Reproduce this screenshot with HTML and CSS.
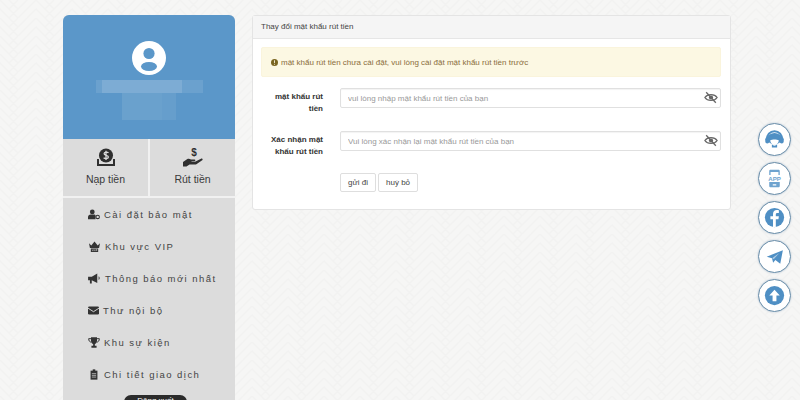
FILE: index.html
```html
<!DOCTYPE html>
<html lang="vi">
<head>
<meta charset="utf-8">
<title>Thay đổi mật khẩu rút tiền</title>
<link rel="stylesheet" href="styles.css">
</head>
<body>
<svg class="pattern" width="0" height="0"><defs><pattern id="zig" width="36" height="18" patternUnits="userSpaceOnUse"><path d="M-9 0L9 18M-9 -9L18 18M9 0L18 9M0 9l9 9M0-9L18 9M27 0L9 18M36 0L18 18M18 0L9 9M36 9l-9 9M36-9L18 9" fill="none" stroke="#f2f2f1" stroke-width="1.500"/></pattern></defs></svg>
<svg class="bg" aria-hidden="true"><rect width="100%" height="100%" fill="url(#zig)"/></svg>
<div class="page">
  <aside class="side">
    <div class="profile">
      <svg class="avatar" viewBox="0 0 34 34"><circle cx="17" cy="17" r="17" fill="#fff"/><circle cx="17" cy="12.500" r="5.600" fill="#5b97c9"/><ellipse cx="17" cy="25.500" rx="8" ry="4.600" fill="#5b97c9"/></svg>
      <div class="blur-a"><span class="b1"></span><span class="b2"></span><span class="b3"></span></div>
      <div class="blur-b"><span></span></div>
    </div>
    <div class="cash">
      <div class="cash-item">
        <svg class="cash-icon" viewBox="0 0 20 20"><circle cx="10" cy="7.500" r="7" fill="#2f2f2f"/><path d="M1 11v7h18v-7h-2v5H3v-5z" fill="#2f2f2f"/><path d="M12.500 4.800c-1-.9-4.400-1-4.400 1 0 2.100 4.300 1 4.300 3.200 0 1.900-3.500 1.900-4.800.8M10 2.800v9.300" fill="none" stroke="#dcdcdc" stroke-width="1.300"/></svg>
        <span>Nạp tiền</span>
      </div>
      <div class="cash-item">
        <svg class="cash-icon" viewBox="0 0 20 20"><path d="M0 14l4-2.800c1.500-.8 2.500-.5 4 .2h3.500c1.200 0 1.200 1.700 0 1.800H8.500v.5h3.500l6-3c1.200-.5 2.200.7 1.200 1.500l-6.200 4.300H6.500L3.500 18.500H0z" fill="#2f2f2f"/><text x="11" y="8" class="dollar">$</text></svg>
        <span>Rút tiền</span>
      </div>
    </div>
    <nav class="menu">
      <a class="item"><svg class="mi" viewBox="0 0 14 12"><circle cx="5" cy="3" r="2.800" fill="#333"/><path d="M0 11.500V9c0-2 1.500-3 3-3h4c1 0 1.500.5 1.800 1v4.500z" fill="#333"/><circle cx="11.300" cy="8.800" r="2" fill="none" stroke="#333" stroke-width="1.200"/></svg><span>Cài đặt bảo mật</span></a>
      <a class="item"><svg class="mi mi-w" viewBox="0 0 14 12"><path d="M1 2.500l2.500 2.500L7 .5 10.500 5 13 2.500l-1 5H2z" fill="#333"/><path d="M3 8.200h8V12H3z" fill="#333"/><path d="M4.500 9.200l.7 1.800.7-1.800M7 9.200V11M8.500 11V9.200h1.200v1H8.500" fill="none" stroke="#dcdcdc" stroke-width=".5"/></svg><span>Khu vực VIP</span></a>
      <a class="item"><svg class="mi mi-w" viewBox="0 0 14 12"><path d="M0 4h4l6-3.500v10.500L4 8v3.500H2V8H0z" fill="#333"/><path d="M11.500 3.500c1.500.7 1.500 3.300 0 4z" fill="#333"/></svg><span>Thông báo mới nhất</span></a>
      <a class="item"><svg class="mi mi-n" viewBox="0 0 14 12"><rect y="1" width="14" height="10" rx="1.500" fill="#333"/><path d="M0 3l7 4.500L14 3" fill="none" stroke="#dcdcdc" stroke-width="1.200"/></svg><span>Thư nội bộ</span></a>
      <a class="item"><svg class="mi" viewBox="0 0 14 12"><path d="M3.500 0h7v4c0 2.200-1.500 3.500-2.500 3.800v2h2V12H4v-2.200h2v-2C5 7.500 3.500 6.200 3.500 4z" fill="#333"/><path d="M3.500 1.500H.8c0 2.500 1 3.800 3 4.200M10.500 1.500h2.700c0 2.500-1 3.800-3 4.200" fill="none" stroke="#333" stroke-width="1.100"/></svg><span>Khu sự kiện</span></a>
      <a class="item"><svg class="mi" viewBox="0 0 14 12"><path d="M3 1.500h8v10.500H3z" fill="#333"/><path d="M5.500 0h3v2.500h-3z" fill="#333"/><path d="M4.500 5h5M4.500 7h5M4.500 9h5" stroke="#dcdcdc" stroke-width=".8"/></svg><span>Chi tiết giao dịch</span></a>
    </nav>
    <span class="tip">Đăng xuất</span>
  </aside>
  <main class="panel">
    <header class="panel-head">Thay đổi mật khẩu rút tiền</header>
    <div class="panel-body">
      <div class="alert"><svg class="alert-icon" viewBox="0 0 8 8"><circle cx="4" cy="4" r="4" fill="#7a6520"/><path d="M4 1.500v3M4 5.500v1" stroke="#fcf8e3" stroke-width="1"/></svg><span>mật khẩu rút tiền chưa cài đặt, vui lòng cài đặt mật khẩu rút tiền trước</span></div>
      <div class="row">
        <label class="label">mật khẩu rút tiền</label>
        <div class="field"><input class="input" placeholder="vui lòng nhập mật khẩu rút tiền của bạn"><svg class="eye" viewBox="0 0 16 14"><path d="M1 7c3-4.500 11-4.500 14 0-3 4.500-11 4.500-14 0z" fill="none" stroke="#666" stroke-width="1.500"/><circle cx="8" cy="7" r="2.400" fill="#666"/><path d="M2.500 1l11 12" stroke="#666" stroke-width="1.500"/></svg></div>
      </div>
      <div class="row">
        <label class="label">Xác nhận mật khẩu rút tiền</label>
        <div class="field"><input class="input" placeholder="Vui lòng xác nhận lại mật khẩu rút tiền của bạn"><svg class="eye" viewBox="0 0 16 14"><path d="M1 7c3-4.500 11-4.500 14 0-3 4.500-11 4.500-14 0z" fill="none" stroke="#666" stroke-width="1.500"/><circle cx="8" cy="7" r="2.400" fill="#666"/><path d="M2.500 1l11 12" stroke="#666" stroke-width="1.500"/></svg></div>
      </div>
      <div class="actions"><button class="btn">gửi đi</button><button class="btn">huỷ bỏ</button></div>
    </div>
  </main>
</div>
<div class="float">
  <a class="fab"><svg viewBox="0 0 24 24"><path d="M3 13C3 6.500 7 2.500 12 2.500S21 6.500 21 13" fill="none" stroke="#4f8fc4" stroke-width="2.400"/><ellipse cx="12" cy="11" rx="8" ry="6.500" fill="#4f8fc4"/><rect x="1.500" y="9.500" width="4.500" height="7" rx="2.200" fill="#4f8fc4"/><rect x="18" y="9.500" width="4.500" height="7" rx="2.200" fill="#4f8fc4"/><path d="M7 13c2.500-1.500 7.500-1.500 10 0-.5 3-2.500 5-5 5s-4.500-2-5-5z" fill="#fff"/><path d="M9 17.500c1.500 2 4.500 2 6 0v3.500H9z" fill="#4f8fc4"/></svg></a>
  <a class="fab"><svg viewBox="0 0 24 24"><path d="M6 8V3.500C6 2.500 6.800 2 7.500 2h9c.8 0 1.500.5 1.500 1.500V8h-1.500V4.500h-9V8zM6 16v4.500c0 1 .7 1.500 1.500 1.500h9c.8 0 1.500-.5 1.500-1.500V16zM10 18.500h4v1.500h-4z" fill="#6ea3cf" fill-rule="evenodd"/><text x="12" y="14.600" class="app">APP</text></svg></a>
  <a class="fab"><svg viewBox="0 0 24 24"><circle cx="12" cy="12" r="11" fill="#4f8fc4"/><path d="M13.500 23v-9h3l.5-3.500h-3.500V8.500c0-1 .4-1.700 1.800-1.700H17V3.700c-.5-.1-1.400-.2-2.400-.2-2.600 0-4.300 1.600-4.300 4.500v2.500H7.300V14h3v9z" fill="#fff"/></svg></a>
  <a class="fab"><svg class="tg" viewBox="0 0 24 24"><path d="M1 11.500L22.500 3 19 21l-6.500-5-3 3.500-1.500-6z" fill="#4f8fc4"/><path d="M8 13.500L18 6.500l-7.500 8" fill="#fff" opacity=".55"/></svg></a>
  <a class="fab"><svg viewBox="0 0 24 24"><circle cx="12" cy="12" r="11" fill="#4f8fc4"/><path d="M12 5.500l6 6.500h-3.800v6.500H9.800V12H6z" fill="#fff"/></svg></a>
</div>
</body>
</html>
```
FILE: styles.css
```css
* { box-sizing: border-box; }
html, body { height: 100%; }
body {
  margin: 0;
  height: 400px;
  overflow: hidden;
  background: #f6f6f5;
  font-family: "Liberation Sans", Arial, sans-serif;
  color: #333;
  position: relative;
}
.pattern { position: absolute; }
.bg { position: absolute; inset: 0; width: 100%; height: 100%; }
.page {
  position: relative;
  display: flex;
  align-items: flex-start;
  gap: 17px;
  padding: 15px 0 0 63px;
}
.side {
  width: 172px;
  flex: none;
  height: 420px;
  position: relative;
  border-radius: 6px 6px 0 0;
  overflow: hidden;
  background: #dcdcdc;
}
.profile {
  height: 124px;
  background: #5b97c9;
  display: flex;
  flex-direction: column;
  align-items: center;
  padding-top: 26px;
}
.avatar { width: 34px; height: 34px; flex: none; }
.blur-a { display: flex; margin-top: 5px; height: 13px; width: 107px; background: rgba(255,255,255,.1); justify-content: center; }
.blur-a span { display: block; height: 13px; background: rgba(255,255,255,.12); }
.b1 { width: 13px; margin-left: -14px; }
.b2 { width: 27px; }
.b3 { width: 40px; }
.blur-b { width: 54px; height: 27px; background: rgba(255,255,255,.07); }
.blur-b span { display: block; width: 40px; height: 27px; background: rgba(255,255,255,.03); }
.cash { display: flex; height: 59px; border-bottom: 2px solid #f1f1f1; }
.cash-item {
  flex: 1;
  display: flex;
  flex-direction: column;
  align-items: center;
  padding-top: 9px;
  gap: 5px;
  font-size: 10.500px;
  color: #3a3a3a;
}
.cash-item + .cash-item { border-left: 2px solid #f1f1f1; }
.cash-icon { width: 20px; height: 20px; }
.dollar { font: bold 10px "Liberation Sans", sans-serif; fill: #2f2f2f; text-anchor: middle; }
.menu { padding: 0 0 0 25px; display: flex; flex-direction: column; }
.item {
  display: flex;
  align-items: center;
  height: 32px;
  gap: 4px;
  font-size: 9.500px;
  letter-spacing: 1.450px;
  color: #444;
  white-space: nowrap;
}
.mi { width: 12px; height: 11px; flex: none; }
.mi-w { width: 13px; }
.mi-n { width: 11px; }
.tip {
  position: absolute;
  left: 61px;
  top: 380px;
  width: 63px;
  height: 14px;
  border-radius: 7px;
  background: #2b2b2b;
  color: #fff;
  font-size: 8px;
  text-align: center;
  line-height: 11px;
}
.panel {
  width: 479px;
  flex: none;
  background: #fff;
  border: 1px solid #e4e4e4;
  border-radius: 3px;
  height: 195px;
}
.panel-head {
  height: 23px;
  background: #f5f5f5;
  border-bottom: 1px solid #e6e6e6;
  font-size: 8px;
  line-height: 22px;
  padding-left: 8px;
  color: #444;
}
.panel-body { padding: 8px 9px 0 8px; }
.alert {
  height: 30px;
  background: #fcf8e3;
  border: 1px solid #faf4dc;
  border-radius: 2px;
  display: flex;
  align-items: center;
  gap: 3px;
  padding-left: 9px;
  font-size: 8px;
  color: #8a6d3b;
}
.alert-icon { width: 7px; height: 7px; flex: none; }
.row { display: flex; margin-top: 11px; }
.row + .row { margin-top: 16px; }
.label {
  width: 62px;
  flex: none;
  text-align: right;
  font-size: 8px;
  font-weight: bold;
  line-height: 12px;
  padding-top: 3px;
  color: #333;
}
.field { flex: 1; margin-left: 17px; height: 20px; position: relative; }
.input {
  display: block;
  width: 100%;
  height: 20px;
  border: 1px solid #e0e0e0;
  border-radius: 2px;
  padding: 0 7px;
  font: 8px "Liberation Sans", sans-serif;
  background: #fff;
  box-shadow: inset 0 1px 1px rgba(0,0,0,.05);
}
.input::placeholder { color: #999; opacity: 1; }
.eye { position: absolute; right: 3px; top: 3px; width: 14px; height: 13px; }
.actions { display: flex; gap: 2px; margin: 15px 0 0 79px; }
.btn {
  height: 19px;
  padding: 0 7px;
  background: #fff;
  border: 1px solid #dedede;
  border-radius: 2px;
  font: 8px "Liberation Sans", sans-serif;
  color: #444;
}
.float {
  position: absolute;
  right: 9px;
  top: 123px;
  display: flex;
  flex-direction: column;
  gap: 6px;
}
.fab {
  width: 33px;
  height: 33px;
  border-radius: 50%;
  background: #fff;
  border: 1.500px solid #6a8ea9;
  box-shadow: 0 0 2px rgba(80,120,160,.4);
  display: flex;
  align-items: center;
  justify-content: center;
}
.fab svg { width: 21px; height: 21px; }
.fab .tg { width: 18px; height: 18px; }
.app { font: bold 7px "Liberation Sans", sans-serif; fill: #6ea3cf; text-anchor: middle; }
```
